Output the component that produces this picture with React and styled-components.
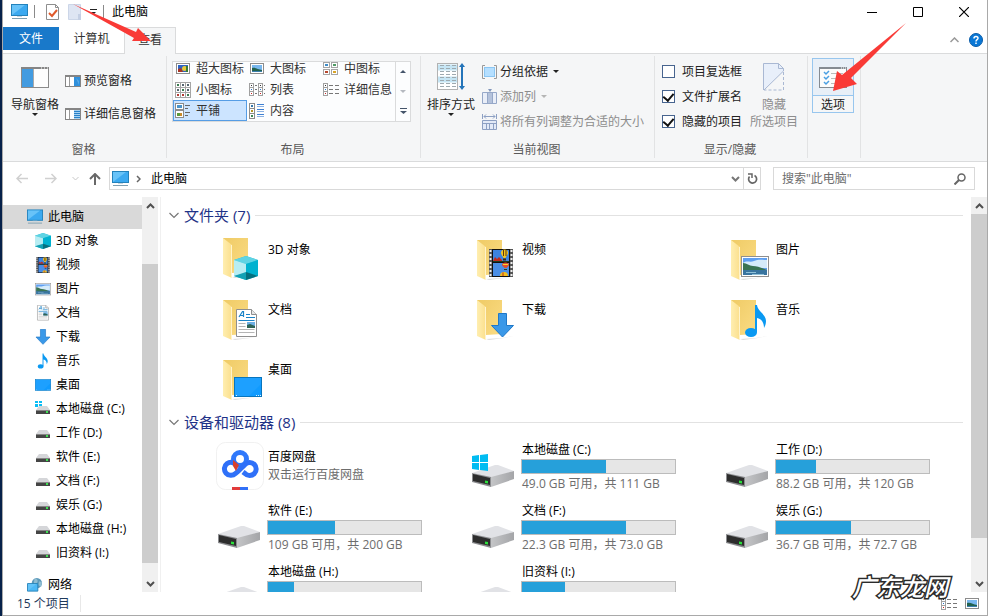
import React from "react";
import styled, { createGlobalStyle, css } from "styled-components";

const GlobalStyle = createGlobalStyle`
    * {
        box-sizing: border-box;
    }
    body {
        margin: 0;
        background: #fff;
        overflow: hidden;
    }
    body, button, input {
        font-family: "Open Sans", "Noto Sans CJK SC", sans-serif;
        font-size: 12px;
        line-height: 16px;
        color: #000;
    }
    button {
        border: 0;
        padding: 0;
        margin: 0;
        background: none;
        white-space: nowrap;
    }
    svg {
        display: block;
        flex: none;
    }
`;

/* ---------- data ---------- */

const folders = [
    { name: "3D 对象", art: "cube" },
    { name: "视频", art: "film" },
    { name: "图片", art: "picture" },
    { name: "文档", art: "doc" },
    { name: "下载", art: "download" },
    { name: "音乐", art: "music" },
    { name: "桌面", art: "desktop" },
];

const drives = [
    { name: "本地磁盘 (C:)", used: 55, info: "49.0 GB 可用，共 111 GB", system: true },
    { name: "工作 (D:)", used: 26, info: "88.2 GB 可用，共 120 GB" },
    { name: "软件 (E:)", used: 44, info: "109 GB 可用，共 200 GB" },
    { name: "文档 (F:)", used: 68, info: "22.3 GB 可用，共 73.0 GB" },
    { name: "娱乐 (G:)", used: 49, info: "36.7 GB 可用，共 72.7 GB" },
    { name: "本地磁盘 (H:)", used: 17 },
    { name: "旧资料 (I:)", used: 28 },
];

const layouts = [
    { name: "超大图标", icon: "one" },
    { name: "大图标", icon: "photo" },
    { name: "中图标", icon: "four" },
    { name: "小图标", icon: "nine" },
    { name: "列表", icon: "list" },
    { name: "详细信息", icon: "details" },
    { name: "平铺", icon: "tiles" },
    { name: "内容", icon: "content" },
];

/* ---------- drawings shared by the tiles and the tree ---------- */

function Cube() {
    return (
        <g>
            <path d="M18 26L30 22L42 26V42L30 46L18 42Z" fill="#21bdd4" />
            <path d="M18 26L30 22L42 26L30 30Z" fill="#5fd3e3" />
            <path d="M18 26L30 30V40L18 42Z" fill="#b8edf3" />
            <path d="M42 26L30 30V40L42 42Z" fill="#00b2d0" />
            <path d="M18 42L30 38V46Z" fill="#13a1b4" />
            <path d="M42 42L30 38V46Z" fill="#05707f" />
        </g>
    );
}

function Film() {
    return (
        <g>
            <rect x="19" y="15" width="24" height="28" fill="#555" />
            <path d="M20.500 16V43M41.500 16V43" stroke="#eee" strokeWidth="2" strokeDasharray="2 2" />
            <rect x="22" y="15" width="18" height="28" fill="#111" />
            <rect x="23" y="16" width="16" height="12" fill="#3d83e0" />
            <rect x="23" y="29" width="16" height="13" fill="#4a8ee6" />
            <path d="M23 27l2-4 2 2 2-2 3 3v1z" fill="#c22b1c" />
            <path d="M23 27.500h16" stroke="#1d3c20" />
            <path d="M31 19a3.500 3.500 0 0 1 7 0c0 2-2 3-2.500 5h-2C33 22 31 21 31 19z" fill="#f5c520" />
            <path d="M33 16h1v6h-1zM35.500 16h1v6h-1z" fill="#5a3a10" />
            <path d="M33 24.500h3v2h-3z" fill="#3a2a10" />
            <path d="M32 31a3.500 2.500 0 0 1 7 0c0 1-2 2-2.500 3h-2C34 33 32 32 32 31z" fill="#e0502c" />
            <path d="M33 30h5v1h-5z" fill="#f7d231" />
            <path d="M34 35h3v1h-3z" fill="#28401c" />
            <path d="M30 42a4 4 0 0 1 8 0z" fill="#f2bd1e" />
            <path d="M32.500 38.500h1V42h-1z" fill="#be2a1e" />
        </g>
    );
}

function Picture() {
    return (
        <g>
            <rect x="17.500" y="22.500" width="27" height="20" fill="#fff" stroke="#8f8f8f" />
            <rect x="19" y="24" width="24" height="17" fill="#5f9ff0" />
            <path d="M19 29c4-3 7 0 11-2s9-1 13-1v8H19z" fill="#d5ebfa" />
            <path d="M19 29c4 0 6 3 10 3s9 2 14 4v1H19z" fill="#3a7453" />
            <path d="M19 36h24v5H19z" fill="#39749f" />
            <path d="M22 38.500h10M28 40.500h12" stroke="#8fc0d8" />
        </g>
    );
}

function Doc() {
    return (
        <g>
            <path d="M20.500 15.500h15l5 5v22h-20z" fill="#fff" stroke="#8f8f8f" />
            <path d="M35.500 15.500v5h5" fill="#e6e6e6" stroke="#8f8f8f" />
            <path d="M23 23l3.500-5.500h1V23M24.500 21.500h3M30 20.500h4M30 23.500h9M22.500 26.500h16" fill="none" stroke="#1a83c7" strokeWidth="1.200" />
            <path d="M22.500 29.500h7M22.500 32.500h7M22.500 35.500h16M22.500 38.500h16" stroke="#b5b5b5" />
            <rect x="31" y="28" width="8" height="6" fill="#6fb0e4" />
            <path d="M31 31l3-1 5 2v2h-8z" fill="#2e6355" />
        </g>
    );
}

function Download() {
    return <path d="M28.500 19.500h8v12h7l-11 11.500-11-11.500h7z" fill="#3a98e8" stroke="#1f78c8" />;
}

function Music() {
    return (
        <g fill="#0a99f2">
            <ellipse cx="27" cy="38.500" rx="6" ry="4.500" />
            <path d="M31 11h2c1 7 9 9 9 16 0 3-1 5-2 7 0-5-2-9-7-10v14h-2z" />
        </g>
    );
}

function Desktop() {
    return (
        <g>
            <rect x="18.500" y="23.500" width="27" height="19" fill="#109bff" stroke="#0875bd" />
            <path d="M19 42L33 42L45 30V24H19Z" fill="#2aa6ff" opacity=".5" />
            <path d="M20 41.500h1M40 41.500h1M42 41.500h1M44 41.500h1" stroke="#d9f0ff" />
        </g>
    );
}

const arts = {
    cube: { Draw: Cube, box: "18 22 24 24" },
    film: { Draw: Film, box: "17 15 28 28" },
    picture: { Draw: Picture, box: "17 18 28 28" },
    doc: { Draw: Doc, box: "16 15 29 29" },
    download: { Draw: Download, box: "20 19 25 25" },
    music: { Draw: Music, box: "15 10 34 34" },
    desktop: { Draw: Desktop, box: "18 19 28 28" },
};

function FolderIcon({ art }) {
    const { Draw } = arts[art];
    const y = art === "cube" ? -2 : 0;
    return (
        <svg width="48" height="48" viewBox="0 0 48 48">
            <defs>
                <linearGradient id={"back-" + art} x1="0" x2="1" y1="0" y2="1">
                    <stop offset="0" stopColor="#efcb66" />
                    <stop offset="1" stopColor="#fbdc84" />
                </linearGradient>
                <linearGradient id={"flap-" + art} x1="0" x2="1">
                    <stop offset="0" stopColor="#ffeeb0" />
                    <stop offset="1" stopColor="#fbdf8c" />
                </linearGradient>
            </defs>
            <g transform={`translate(0 ${y})`}>
                <path d="M16 45l16-1 12-2-10 2-15 2z" fill="#ddd" />
                <path d="M7 6H32V40L16 41L7 36Z" fill={`url(#back-${art})`} />
                <path d="M7 6L16 13V46L7 42Z" fill={`url(#flap-${art})`} />
                <path d="M15.500 13V46" stroke="#fff3cb" />
            </g>
            <Draw />
        </svg>
    );
}

function SmallArt({ art }) {
    const { Draw, box } = arts[art];
    return (
        <svg width="16" height="16" viewBox={box}>
            <Draw />
        </svg>
    );
}

function SmallDrive({ system }) {
    return (
        <svg width="16" height="16" viewBox="0 0 16 16">
            {system && <path d="M0 0h3v2H0zM4 0h3v2H4zM0 3h3v3H0zM4 3h3v3H4z" fill="#09bdf5" />}
            <path d="M4 5h8l3 4H1z" fill="#d5d6d9" />
            <path d="M1 9h14v4H1z" fill="#454545" />
            <path d="M1 9.500h14" stroke="#858585" />
            <rect x="11" y="10" width="2" height="2" fill="#3ee052" />
        </svg>
    );
}

function DriveIcon({ system }) {
    return (
        <svg width="48" height="48" viewBox="0 0 48 48">
            <defs>
                <linearGradient id="driveSide" x1="0" x2="1">
                    <stop offset="0" stopColor="#c4c5c7" />
                    <stop offset="1" stopColor="#a4a5a8" />
                </linearGradient>
            </defs>
            <path d="M2 31L25 23H28L44 29L21 36Z" fill="#e1e2e6" />
            <path d="M21 35L44 29V37L21 45Z" fill="url(#driveSide)" />
            <path d="M2 31L21 35V45L2 40Z" fill="#8b8c8f" />
            <path d="M3 32L20 36V43L3 39Z" fill="#2d2d2d" />
            <path d="M15 38.500l3 .5v2.500l-3-.5z" fill="#2be03c" />
            {system && (
                <path d="M2 14l7-1v7H2zM10 13l8-1v8h-8zM2 21h7v7l-7-1zM10 21h8v8l-8-1z" fill="#00bcf2" />
            )}
        </svg>
    );
}

function BaiduIcon() {
    return (
        <svg width="48" height="48" viewBox="0 0 48 48">
            <rect x=".5" y=".5" width="47" height="47" rx="9" fill="#fff" stroke="#f1f1f1" />
            <g fill="none" strokeWidth="5">
                <circle cx="24" cy="17" r="6.500" stroke="#2f78fb" />
                <path d="M20.500 23.500A6.500 6.500 0 1 0 19.500 31.500C23 29 26 25 29 22.500A6.500 6.500 0 1 1 29 31.500L27 30" stroke="#2f70f8" />
            </g>
            <path d="M17 18l6 5-3 6-3-5z" fill="#d8402f" />
            <path d="M16 45h8v3h-8z" fill="#e23b3b" />
            <path d="M24 45h8v3h-8z" fill="#3170f7" />
        </svg>
    );
}

function Computer({ size = 18 }) {
    return (
        <svg width={size} height="16" viewBox="0 0 17 16">
            <rect x=".5" y=".5" width="16" height="11" fill="#3ba9f0" stroke="#2382bb" />
            <path d="M1 11L14 1H1z" fill="#68c3f8" />
            <path d="M6 12h5v1H6z" fill="#c8d5dd" />
            <path d="M1 14.500h15" stroke="#7f9fb0" />
        </svg>
    );
}

function NetworkIcon() {
    return (
        <svg width="16" height="16" viewBox="0 0 17 16">
            <circle cx="10.500" cy="6" r="5.500" fill="#5d9abb" />
            <path d="M8 1c3 0 4 2 3 4s-3 1-4 3zM13 4l3 1-1 5-3-2z" fill="#8fbdd2" />
            <path d="M.5 6.500h11v8H.5z" fill="#4cb8f5" stroke="#2682b8" />
            <path d="M1 14l9-7H1z" fill="#62c3f8" />
        </svg>
    );
}

/* ---------- ribbon drawings ---------- */

function LayoutIcon({ kind }) {
    const frame = { fill: "#fff", stroke: "#8c8c8c" };
    return (
        <svg width="16" height="16" viewBox="0 0 16 16">
            {kind === "one" && (
                <g>
                    <rect x="1.500" y="2.500" width="13" height="10" {...frame} />
                    <path d="M3 4h10v7H3z" fill="#2d63c4" />
                    <path d="M3 8l3-1 2 4H3z" fill="#a83524" />
                    <circle cx="9.500" cy="7.500" r="2.500" fill="#e8c93a" />
                    <path d="M11 5h2v6h-2z" fill="#397a35" />
                </g>
            )}
            {kind === "photo" && (
                <g>
                    <rect x="1.500" y="2.500" width="13" height="10" {...frame} />
                    <path d="M3 4h10v7H3z" fill="#78b7ee" />
                    <path d="M3 7c4-1 6 2 10 2v2H3z" fill="#22624f" />
                    <path d="M3 10h10v1H3z" fill="#3c7fae" />
                </g>
            )}
            {kind === "four" &&
                [[0, 1, "#3f8dc7"], [8, 1, "#4f9a64"], [0, 8, "#b8462d"], [8, 8, "#d9a527"]].map(([x, y, fill]) => (
                    <g key={x + "-" + y}>
                        <rect x={x + 0.5} y={y + 0.5} width="6" height="5" stroke="#a5a5a5" fill="#fff" />
                        <path d={`M${x + 2} ${y + 2}h3v2h-3z`} fill={fill} />
                    </g>
                ))}
            {kind === "nine" &&
                [0, 5, 10].map((x) =>
                    [0, 5, 10].map((y) => (
                        <g key={x + "-" + y}>
                            <rect x={x + 0.5} y={y + 0.5} width="5" height="5" stroke="#a5a5a5" fill="#fff" />
                            <path d={`M${x + 2} ${y + 2}h2v2h-2z`} fill={x === y ? "#3a7a50" : y === 10 ? "#b33a33" : "#54646e"} />
                        </g>
                    ))
                )}
            {(kind === "list" || kind === "details") && (
                <g>
                    {(kind === "list" ? [0, 9] : [0]).map((x) => (
                        <g key={x}>
                            <rect x={x + 0.5} y="1.500" width="4" height="12" fill="#fff" stroke="#a0a0a0" />
                            <path d={`M${x} 5.500h5M${x} 9.500h5`} stroke="#a0a0a0" />
                            <path d={`M${x + 2} 3h1v1h-1z`} fill="#333" />
                            <path d={`M${x + 2} 7h1v1h-1z`} fill="#2875c8" />
                            <path d={`M${x + 2} 11h1v1h-1z`} fill="#c22" />
                        </g>
                    ))}
                    {kind === "list" ? (
                        <path d="M6 3.500h2M6 7.500h2M6 11.500h2M15 3.500h1M15 7.500h1M15 11.500h1" stroke="#777" />
                    ) : (
                        <path d="M6 3.500h4M12 3.500h4M6 7.500h4M12 7.500h4M6 11.500h4M12 11.500h4" stroke="#777" />
                    )}
                </g>
            )}
            {kind === "tiles" && (
                <g>
                    <rect x=".5" y=".5" width="8" height="6" {...frame} />
                    <rect x=".5" y="7.500" width="8" height="7" {...frame} />
                    <path d="M2 2h5v3H2z" fill="#4a93c9" />
                    <path d="M2 10h3v3H2z" fill="#5b9a3b" />
                    <path d="M5 10h2v3H5z" fill="#c98a28" />
                    <path d="M10 2.500h5M10 5.500h3M10 9.500h5M10 12.500h3" stroke="#666" />
                </g>
            )}
            {kind === "content" && (
                <g>
                    <rect x=".5" y=".5" width="5" height="15" {...frame} />
                    <path d="M0 5.500h6M0 10.500h6" stroke="#8c8c8c" />
                    <path d="M2 2h2v2H2z" fill="#3578ac" />
                    <path d="M2 7h2v2H2z" fill="#b59726" />
                    <path d="M2 12h2v2H2z" fill="#3f8a52" />
                    <path d="M8 1.500h7M8 6.500h7M8 11.500h7" stroke="#3f80d3" />
                    <path d="M8 3.500h7M8 8.500h7M8 13.500h7" stroke="#8cb2e2" />
                </g>
            )}
        </svg>
    );
}

function NavPaneIcon() {
    return (
        <svg width="28" height="21" viewBox="0 0 28 21">
            <rect x=".5" y=".5" width="27" height="20" fill="#fdfdfd" stroke="#8a8a8a" />
            <path d="M0 1h28" stroke="#858585" strokeWidth="2" />
            <path d="M20 1h1M23 1h1M26 1h1" stroke="#fff" />
            <rect x="1" y="2" width="11" height="18" fill="#429be0" />
            <path d="M12.500 2v18" stroke="#aaa" />
        </svg>
    );
}

function PaneIcon({ details }) {
    return (
        <svg width="16" height="12" viewBox="0 0 16 12">
            <rect x=".5" y=".5" width="15" height="11" fill="#fff" stroke="#858585" />
            <path d="M0 1h16" stroke="#858585" strokeWidth="2" />
            <path d="M4.500 2v9" stroke="#999" />
            <rect x="9" y="2" width="6" height="9" fill={details ? "#a7d2f2" : "#3090dc"} />
            {details && <path d="M9 3.500h6M9 5.500h6M9 7.500h6M9 9.500h6" stroke="#2b82c8" />}
            {!details && <path d="M11 3l3 3v4z" fill="#58aae8" />}
        </svg>
    );
}

function SortIcon() {
    return (
        <svg width="28" height="28" viewBox="0 0 28 28">
            <rect x=".5" y=".5" width="20" height="26" fill="#fff" stroke="#b2b2b2" />
            <path d="M1 4.500h19M1 16.500h19" stroke="#c5e5f4" strokeWidth="6" />
            {[3, 6, 9, 12, 15, 18, 21, 24].map((y) => (
                <path key={y} d={`M3 ${y - 0.5}h4M9 ${y - 0.5}h4M15 ${y - 0.5}h4`} stroke="#9eaab0" />
            ))}
            <path d="M25 3v21" stroke="#2474b9" strokeWidth="2" />
            <path d="M22 4l3-4 3 4zM22 23l3 4 3-4z" fill="#2474b9" />
        </svg>
    );
}

function GroupByIcon() {
    return (
        <svg width="15" height="16" viewBox="0 0 15 16">
            <path d="M3 1.500H.5v13H3M12 1.500h2.500v13H12" fill="none" stroke="#999" />
            <rect x="2.500" y="3.500" width="10" height="9" fill="#b5dfff" stroke="#8cc6f2" />
        </svg>
    );
}

function AddColumnIcon() {
    return (
        <svg width="15" height="16" viewBox="0 0 15 16">
            <path d="M.5 3.500h14v11H.5zM5.500 3v11M10.500 3v11" fill="#e9eef8" stroke="#96a8c8" />
            <path d="M6 4h4v10H6z" fill="#b4c2db" />
            <path d="M6 0h4L8 3z" fill="#8196bb" />
        </svg>
    );
}

function FitColumnsIcon() {
    return (
        <svg width="15" height="16" viewBox="0 0 15 16">
            <path d="M.5 0v5M14.500 0v5M2 2.500h11M4 .5l-2 2 2 2M11 .5l2 2-2 2" fill="none" stroke="#8da0c3" />
            <path d="M.5 6.500h14v9H.5zM.5 9.500h14M4.500 10v5M7.500 10v5M11.500 10v5" fill="#e3eaf7" stroke="#8da0c3" />
        </svg>
    );
}

function HideIcon() {
    return (
        <svg width="22" height="28" viewBox="0 0 22 28">
            <path d="M.5 27V.5h15l5 5V8z" fill="#e8effa" />
            <path d="M.5 27V.5h15l5 5V8L1 27" fill="none" stroke="#a9b8d3" />
            <path d="M15.500.5v5h5" fill="none" stroke="#a9b8d3" />
            <path d="M20.500 9v18H1" fill="none" stroke="#a9b8d3" strokeDasharray="3 2" />
        </svg>
    );
}

function OptionsIcon() {
    return (
        <svg width="28" height="21" viewBox="0 0 28 21">
            <rect x=".5" y=".5" width="27" height="20" fill="#fcfcfc" stroke="#858b92" />
            <path d="M0 1h28" stroke="#858b92" strokeWidth="2" />
            <path d="M22 1h1M24 1h1M26 1h1" stroke="#fff" />
            <path d="M5 5l2 2 3-3M5 10l2 2 3-3M5 15l2 2 3-3" fill="none" stroke="#4a9fe2" strokeWidth="1.500" />
            <path d="M12 6.500h12M12 11.500h12M12 16.500h12" stroke="#bbb" />
        </svg>
    );
}

function Caret({ color = "#222" }) {
    return (
        <svg width="6" height="3" viewBox="0 0 6 3">
            <path d="M0 0h6L3 3z" fill={color} />
        </svg>
    );
}

function Chevron({ up, color = "#505050" }) {
    return (
        <svg width="9" height="6" viewBox="0 0 9 6">
            <path d={up ? "M1 5l3.500-3.500L8 5" : "M1 1l3.500 3.500L8 1"} fill="none" stroke={color} strokeWidth="2" />
        </svg>
    );
}

/* ---------- window ---------- */

const Screen = styled.div`
    position: relative;
    height: 100vh;
    padding-left: 2px;
    background: #06214a;
`;

const Window = styled.div`
    display: flex;
    flex-direction: column;
    height: 100%;
    background: #fff;
    border: 1px solid #a9a9a9;
    border-top: 0;
    overflow: hidden;
`;

const TitleBar = styled.header`
    display: flex;
    align-items: center;
    flex: none;
    height: 27px;
    padding: 0 0 4px 8px;
    .title {
        flex: 1;
        padding-left: 6px;
    }
`;

const QuickButton = styled.button`
    display: flex;
    align-items: center;
    justify-content: center;
    width: ${(props) => props.$width}px;
    height: 20px;
`;

const Rule = styled.span`
    width: 1px;
    height: 13px;
    background: #8a8a8a;
`;

const WindowButton = styled.button`
    display: flex;
    align-items: center;
    justify-content: center;
    width: 46px;
    height: 23px;
`;

const Tabs = styled.nav`
    display: flex;
    flex: none;
    height: 26px;
    .grow {
        flex: 1;
    }
`;

const Tab = styled.button`
    width: ${(props) => props.$width}px;
    height: 24px;
    color: #333;
    ${(props) => props.$file && css`
        height: 23px;
        background: #1979ca;
        color: #fff;
    `}
    ${(props) => props.$active && css`
        position: relative;
        height: 27px;
        padding-bottom: 3px;
        background: #f5f6f7;
        border: 1px solid #dadbdc;
        border-bottom: 0;
    `}
`;

const TabTool = styled.button`
    display: flex;
    align-items: center;
    justify-content: center;
    width: 22px;
    height: 25px;
`;

const RibbonBar = styled.div`
    display: flex;
    flex: none;
    height: 109px;
    padding: 2px 0 3px;
    background: #f5f6f7;
    border-top: 1px solid #dadbdc;
    border-bottom: 1px solid #dadbdc;
`;

const Group = styled.section`
    display: flex;
    flex-direction: column;
    flex: none;
    width: ${(props) => props.$width}px;
    border-right: 1px solid #e2e3e4;
    h2 {
        margin: 0;
        padding-right: 2px;
        font-size: 12px;
        font-weight: 400;
        text-align: center;
        color: #5a5a5a;
    }
`;

const GroupBody = styled.div`
    display: flex;
    align-items: flex-start;
    flex: 1;
    padding: 2px 4px 0;
`;

const BigButton = styled.button`
    display: flex;
    flex-direction: column;
    align-items: center;
    flex: none;
    width: ${(props) => props.$width}px;
    line-height: 17px;
    color: ${(props) => (props.disabled ? "#8d8d8d" : "#222")};
    .picture {
        display: flex;
        align-items: center;
        height: 38px;
    }
    ${(props) => props.$hot && css`
        height: 55px;
        border: 1px solid #98c6ee;
        .picture {
            width: 100%;
            justify-content: center;
            height: 37px;
            flex: none;
            background: #e8eff7;
            border-bottom: 1px solid #98c6ee;
        }
    `}
`;

const Stack = styled.div`
    display: grid;
    grid-auto-rows: ${(props) => props.$row}px;
    padding-top: ${(props) => props.$top}px;
    padding-left: ${(props) => props.$left || 0}px;
`;

const SmallButton = styled.button`
    display: flex;
    align-items: center;
    gap: 3px;
    padding: 0 2px;
    color: ${(props) => (props.disabled ? "#8d8d8d" : "#222")};
    svg + span + svg {
        margin-left: 2px;
    }
`;

const Gallery = styled.div`
    display: flex;
    width: 239px;
    height: 61px;
    margin: 3px 0 0 1px;
    background: #fcfdfe;
    border: 1px solid #dadbdc;
`;

const GalleryGrid = styled.div`
    display: grid;
    flex: 1;
    grid-template-columns: repeat(3, 74px);
    grid-auto-rows: 21px;
    align-content: end;
`;

const GalleryItem = styled.button`
    display: flex;
    align-items: center;
    gap: 5px;
    padding: 0 1px;
    border: 1px solid transparent;
    color: #333;
    ${(props) => props.$selected && css`
        background: #cce4ff;
        border-color: #569de5;
    `}
`;

const GalleryScroll = styled.div`
    display: grid;
    grid-template-rows: repeat(3, 1fr);
    width: 15px;
    border-left: 1px solid #dadbdc;
    button {
        display: flex;
        align-items: center;
        justify-content: center;
    }
`;

const Check = styled.label`
    display: flex;
    align-items: center;
    gap: 7px;
    color: #222;
    white-space: nowrap;
    input {
        appearance: none;
        display: flex;
        justify-content: center;
        width: 13px;
        height: 13px;
        margin: 0;
        background: #fff;
        border: 1px solid #47648f;
    }
    input:checked::after {
        content: "";
        width: 5px;
        height: 8px;
        border: solid #111;
        border-width: 0 2px 2px 0;
        transform: rotate(40deg);
    }
`;

const AddressRow = styled.div`
    display: flex;
    align-items: center;
    flex: none;
    height: 35px;
    padding: 0 12px 2px 9px;
`;

const NavButton = styled.button`
    display: flex;
    align-items: center;
    justify-content: center;
    width: ${(props) => props.$width}px;
    height: 22px;
`;

const AddressBox = styled.div`
    display: flex;
    align-items: center;
    flex: 1;
    height: 23px;
    padding-left: 2px;
    border: 1px solid #d9d9d9;
    .place {
        flex: 1;
        padding-left: 4px;
        text-align: left;
    }
    .refresh {
        height: 21px;
        border-left: 1px solid #d9d9d9;
    }
`;

const SearchBox = styled.label`
    display: flex;
    align-items: center;
    width: 202px;
    height: 23px;
    margin-left: 12px;
    padding: 0 8px;
    border: 1px solid #d9d9d9;
    input {
        flex: 1;
        min-width: 0;
        border: 0;
        padding: 0;
        outline: 0;
    }
    input::placeholder {
        color: #6d6d6d;
    }
`;

const Main = styled.div`
    display: flex;
    flex: 1;
    min-height: 0;
`;

const Tree = styled.ul`
    flex: none;
    width: 139px;
    margin: 0;
    padding: 8px 0 0;
    list-style: none;
    overflow: hidden;
    li:last-child {
        margin-top: 8px;
    }
`;

const TreeItem = styled.button`
    display: flex;
    align-items: center;
    gap: 5px;
    width: 100%;
    height: 24px;
    padding-left: ${(props) => (props.$root ? 24 : 32)}px;
    background: ${(props) => (props.$selected ? "#d9d9d9" : "none")};
`;

const ScrollBar = styled.div`
    display: flex;
    flex-direction: column;
    flex: none;
    width: 16px;
    background: #f0f0f0;
    button {
        display: flex;
        align-items: center;
        justify-content: center;
        height: 17px;
    }
    .before {
        flex: ${(props) => props.$before};
    }
    .thumb {
        flex: ${(props) => props.$thumb};
        background: #cdcdcd;
    }
    .after {
        flex: ${(props) => props.$after};
    }
`;

const Content = styled.main`
    flex: 1;
    min-width: 0;
    margin-left: 2px;
    padding-top: 6px;
    border-left: 1px solid #f0f0f0;
    overflow: hidden;
`;

const SectionTitle = styled.h3`
    display: flex;
    align-items: center;
    gap: 5px;
    height: 24px;
    margin: ${(props) => props.$top}px 8px 0 8px;
    font-size: 15px;
    font-weight: 400;
    line-height: 24px;
    color: #1e3287;
    &::after {
        content: "";
        flex: 1;
        height: 1px;
        background: #e2e2e2;
    }
`;

const TileGrid = styled.div`
    display: grid;
    grid-template-columns: repeat(auto-fill, 206px);
    grid-auto-rows: ${(props) => props.$row}px;
    gap: ${(props) => props.$gap}px 48px;
    margin: ${(props) => props.$top}px 0 0 55px;
`;

const Tile = styled.div`
    display: flex;
    gap: 3px;
    padding-top: ${(props) => props.$top}px;
    white-space: nowrap;
`;

const TileText = styled.div`
    display: flex;
    flex-direction: column;
    flex: 1;
    padding-top: ${(props) => props.$top}px;
    gap: ${(props) => props.$gap}px;
    .info {
        padding: 1px 0 0 1px;
        color: #6d6d6d;
    }
    .name {
        padding-left: 1px;
    }
`;

const Bar = styled.div`
    height: 15px;
    background: #e6e6e6;
    border: 1px solid #bcbcbc;
    div {
        height: 100%;
        background: #26a0da;
    }
`;

const StatusBar = styled.footer`
    display: flex;
    align-items: center;
    flex: none;
    height: 23px;
    padding: 0 7px 0 14px;
    color: #1e395b;
    .count {
        flex: 1;
    }
    .count span {
        padding-right: 10px;
        border-right: 1px solid #e8e8e8;
    }
    button {
        margin-left: 7px;
    }
`;

const Pointer = styled.svg`
    position: absolute;
    top: ${(props) => props.$top}px;
    left: ${(props) => props.$left}px;
    pointer-events: none;
`;

const Watermark = styled.div`
    position: absolute;
    right: 40px;
    bottom: 13px;
    font-size: 24px;
    line-height: 32px;
    font-weight: 500;
    font-style: italic;
    color: #fff;
    -webkit-text-stroke: 3px #2b2b2b;
    paint-order: stroke fill;
    pointer-events: none;
`;

/* ---------- parts ---------- */

function Title() {
    return (
        <TitleBar>
            <Computer size={17} />
            <QuickButton $width={13} as="span"><Rule /></QuickButton>
            <QuickButton $width={22} aria-label="属性">
                <svg width="13" height="16" viewBox="0 0 13 16">
                    <path d="M.5.5h9l3 3v12H.5z" fill="#fff" stroke="#8e8e8e" />
                    <path d="M9.500.5v3h3" fill="none" stroke="#8e8e8e" />
                    <path d="M3 9l3 3 5-6" fill="none" stroke="#e05a2b" strokeWidth="2" />
                </svg>
            </QuickButton>
            <QuickButton $width={22} aria-label="新建文件夹">
                <svg width="13" height="16" viewBox="0 0 13 16">
                    <path d="M.5.5h12v15H.5z" fill="#dee5f3" stroke="#ccd6e8" />
                    <path d="M10 10h3v6h-3z" fill="#c4cfe4" />
                </svg>
            </QuickButton>
            <QuickButton $width={16} aria-label="自定义快速访问工具栏">
                <svg width="7" height="6" viewBox="0 0 7 6">
                    <path d="M0 .5h7" stroke="#222" />
                    <path d="M1 3h5L3.500 5.500z" fill="#222" />
                </svg>
            </QuickButton>
            <QuickButton $width={5} as="span"><Rule /></QuickButton>
            <span className="title">此电脑</span>
            <WindowButton aria-label="最小化">
                <svg width="10" height="10" viewBox="0 0 10 10"><path d="M0 5.500h10" stroke="#000" /></svg>
            </WindowButton>
            <WindowButton aria-label="最大化">
                <svg width="10" height="10" viewBox="0 0 10 10"><path d="M.5.5h9v9h-9z" fill="none" stroke="#000" /></svg>
            </WindowButton>
            <WindowButton aria-label="关闭">
                <svg width="10" height="10" viewBox="0 0 10 10"><path d="M0 0l10 10M10 0L0 10" stroke="#000" strokeWidth="1.200" /></svg>
            </WindowButton>
        </TitleBar>
    );
}

function Ribbon() {
    return (
        <RibbonBar>
            <Group $width={164}>
                <GroupBody>
                    <BigButton $width={56}>
                        <span className="picture"><NavPaneIcon /></span>
                        导航窗格
                        <Caret />
                    </BigButton>
                    <Stack $row={33} $top={6}>
                        <SmallButton><PaneIcon /><span>预览窗格</span></SmallButton>
                        <SmallButton><PaneIcon details /><span>详细信息窗格</span></SmallButton>
                    </Stack>
                </GroupBody>
                <h2>窗格</h2>
            </Group>
            <Group $width={254}>
                <GroupBody>
                    <Gallery>
                        <GalleryGrid>
                            {layouts.map((item) => (
                                <GalleryItem key={item.name} $selected={item.name === "平铺"}>
                                    <LayoutIcon kind={item.icon} />
                                    {item.name}
                                </GalleryItem>
                            ))}
                        </GalleryGrid>
                        <GalleryScroll>
                            <button aria-label="向上">
                                <svg width="6" height="3" viewBox="0 0 6 3"><path d="M0 3h6L3 0z" fill="#44546a" /></svg>
                            </button>
                            <button aria-label="向下"><Caret color="#b5b9c0" /></button>
                            <button aria-label="更多">
                                <svg width="7" height="6" viewBox="0 0 7 6">
                                    <path d="M0 .5h7" stroke="#44546a" />
                                    <path d="M0 3h7L3.500 6z" fill="#44546a" />
                                </svg>
                            </button>
                        </GalleryScroll>
                    </Gallery>
                </GroupBody>
                <h2>布局</h2>
            </Group>
            <Group $width={234}>
                <GroupBody>
                    <BigButton $width={52}>
                        <span className="picture"><SortIcon /></span>
                        排序方式
                        <Caret />
                    </BigButton>
                    <Stack $row={25} $top={1} $left={3}>
                        <SmallButton><GroupByIcon /><span>分组依据</span><Caret /></SmallButton>
                        <SmallButton disabled><AddColumnIcon /><span>添加列</span><Caret color="#b5b5b5" /></SmallButton>
                        <SmallButton disabled><FitColumnsIcon /><span>将所有列调整为合适的大小</span></SmallButton>
                    </Stack>
                </GroupBody>
                <h2>当前视图</h2>
            </Group>
            <Group $width={153}>
                <GroupBody>
                    <Stack $row={25} $top={1} $left={3}>
                        <Check><input type="checkbox" />项目复选框</Check>
                        <Check><input type="checkbox" defaultChecked />文件扩展名</Check>
                        <Check><input type="checkbox" defaultChecked />隐藏的项目</Check>
                    </Stack>
                    <BigButton $width={64} disabled>
                        <span className="picture"><HideIcon /></span>
                        隐藏
                        <span>所选项目</span>
                    </BigButton>
                </GroupBody>
                <h2>显示/隐藏</h2>
            </Group>
            <Group $width={53}>
                <GroupBody>
                    <BigButton $width={42} $hot>
                        <span className="picture"><OptionsIcon /></span>
                        选项
                    </BigButton>
                </GroupBody>
            </Group>
        </RibbonBar>
    );
}

function Address() {
    return (
        <AddressRow>
            <NavButton $width={20} aria-label="后退">
                <svg width="12" height="11" viewBox="0 0 12 11"><path d="M12 5.500H1M5.500 1L1 5.500 5.500 10" fill="none" stroke="#d0d0d0" strokeWidth="1.500" /></svg>
            </NavButton>
            <NavButton $width={38} aria-label="前进">
                <svg width="12" height="11" viewBox="0 0 12 11"><path d="M0 5.500h11M6.500 1L11 5.500 6.500 10" fill="none" stroke="#d0d0d0" strokeWidth="1.500" /></svg>
            </NavButton>
            <NavButton $width={10} aria-label="最近浏览的位置">
                <svg width="7" height="5" viewBox="0 0 7 5"><path d="M.5 1l3 3 3-3" fill="none" stroke="#c8c8c8" /></svg>
            </NavButton>
            <NavButton $width={29} aria-label="上移">
                <svg width="12" height="12" viewBox="0 0 12 12"><path d="M6 12V1M1 6l5-5 5 5" fill="none" stroke="#686868" strokeWidth="2" /></svg>
            </NavButton>
            <AddressBox>
                <Computer size={17} />
                <NavButton $width={18} aria-label="展开">
                    <svg width="5" height="8" viewBox="0 0 5 8"><path d="M1 1l3 3-3 3" fill="none" stroke="#666" strokeWidth="1.500" /></svg>
                </NavButton>
                <button className="place" type="button">此电脑</button>
                <NavButton $width={15} aria-label="以前的位置"><Chevron color="#777" /></NavButton>
                <NavButton $width={17} className="refresh" aria-label="刷新">
                    <svg width="11" height="12" viewBox="0 0 11 12">
                        <path d="M7.500 2.500A4 4 0 1 1 2.500 3.500" fill="none" stroke="#666" strokeWidth="1.700" />
                        <path d="M1 1h4v4" fill="none" stroke="#666" strokeWidth="1.500" />
                    </svg>
                </NavButton>
            </AddressBox>
            <SearchBox>
                <input type="search" placeholder={'搜索"此电脑"'} aria-label="搜索" />
                <svg width="12" height="12" viewBox="0 0 12 12">
                    <circle cx="7.500" cy="4.500" r="3.500" fill="none" stroke="#666" strokeWidth="1.500" />
                    <path d="M5 7L.5 11.500" stroke="#666" strokeWidth="2" />
                </svg>
            </SearchBox>
        </AddressRow>
    );
}

function Scroll(props) {
    return (
        <ScrollBar $before={props.before} $thumb={props.thumb} $after={props.after}>
            <button aria-label="向上滚动"><Chevron up /></button>
            <div className="before" />
            <div className="thumb" />
            <div className="after" />
            <button aria-label="向下滚动"><Chevron /></button>
        </ScrollBar>
    );
}

function Sidebar() {
    return (
        <Tree>
            <li><TreeItem $root $selected><Computer size={16} />此电脑</TreeItem></li>
            {folders.map((place) => (
                <li key={place.name}>
                    <TreeItem><SmallArt art={place.art} />{place.name}</TreeItem>
                </li>
            ))}
            {drives.map((drive) => (
                <li key={drive.name}>
                    <TreeItem><SmallDrive system={drive.system} />{drive.name}</TreeItem>
                </li>
            ))}
            <li><TreeItem $root><NetworkIcon />网络</TreeItem></li>
        </Tree>
    );
}

function SectionHead({ top, children }) {
    return (
        <SectionTitle $top={top}>
            <svg width="10" height="7" viewBox="0 0 10 7">
                <path d="M.5 1L5 5.500 9.500 1" fill="none" stroke="#777" strokeWidth="1.200" />
            </svg>
            {children}
        </SectionTitle>
    );
}

function Files() {
    return (
        <Content>
            <SectionHead top={0}>文件夹 (7)</SectionHead>
            <TileGrid $row={48} $gap={12} $top={7}>
                {folders.map((folder) => (
                    <Tile key={folder.name} $top={0}>
                        <FolderIcon art={folder.art} />
                        <TileText $top={8} $gap={0}>
                            <span className="name">{folder.name}</span>
                        </TileText>
                    </Tile>
                ))}
            </TileGrid>
            <SectionHead top={8}>设备和驱动器 (8)</SectionHead>
            <TileGrid $row={52} $gap={9} $top={6}>
                <Tile $top={2}>
                    <BaiduIcon />
                    <TileText $top={7} $gap={1}>
                        <span className="name">百度网盘</span>
                        <span className="info">双击运行百度网盘</span>
                    </TileText>
                </Tile>
                {drives.map((drive) => (
                    <Tile key={drive.name} $top={2}>
                        <DriveIcon system={drive.system} />
                        <TileText $top={0} $gap={1}>
                            <span className="name">{drive.name}</span>
                            <Bar role="progressbar" aria-label={drive.name} aria-valuenow={drive.used}>
                                <div style={{ width: drive.used + "%" }} />
                            </Bar>
                            {drive.info && <span className="info">{drive.info}</span>}
                        </TileText>
                    </Tile>
                ))}
            </TileGrid>
        </Content>
    );
}

function App() {
    return (
        <>
            <GlobalStyle />
            <Screen>
                <Window>
                    <Title />
                    <Tabs>
                        <Tab $width={56} $file>文件</Tab>
                        <Tab $width={65}>计算机</Tab>
                        <Tab $width={52} $active>查看</Tab>
                        <span className="grow" />
                        <TabTool aria-label="最小化功能区">
                            <svg width="9" height="6" viewBox="0 0 9 6"><path d="M.5 5l4-4 4 4" fill="none" stroke="#999" strokeWidth="1.500" /></svg>
                        </TabTool>
                        <TabTool aria-label="帮助">
                            <svg width="14" height="14" viewBox="0 0 14 14">
                                <circle cx="7" cy="7" r="6.500" fill="#0a78d6" stroke="#0b5ca8" />
                                <path d="M5 5.500C5 3 9 3 9 5.200 9 6.800 7 6.500 7 8.500M7 9.500v1.500" fill="none" stroke="#fff" strokeWidth="1.500" />
                            </svg>
                        </TabTool>
                    </Tabs>
                    <Ribbon />
                    <Address />
                    <Main>
                        <Sidebar />
                        <Scroll before={50} thumb={299} after={12} />
                        <Files />
                        <Scroll before={0} thumb={324} after={37} />
                    </Main>
                    <StatusBar>
                        <div className="count"><span>15 个项目</span></div>
                        <button aria-label="详细信息"><LayoutIcon kind="details" /></button>
                        <button aria-label="大缩略图"><LayoutIcon kind="photo" /></button>
                    </StatusBar>
                </Window>
                <Watermark>广东龙网</Watermark>
                <Pointer $top={4} $left={72} width="82" height="42" viewBox="0 0 82 42">
                    <path d="M1 0L64 28L66 24L79 37L60 37L62 34Z" fill="#f93a36" />
                </Pointer>
                <Pointer $top={22} $left={832} width="76" height="72" viewBox="0 0 76 72">
                    <path d="M74 1L19 56L25 62L1 69L5 49L10 53Z" fill="#f93a36" />
                </Pointer>
            </Screen>
        </>
    );
}

export default App;
